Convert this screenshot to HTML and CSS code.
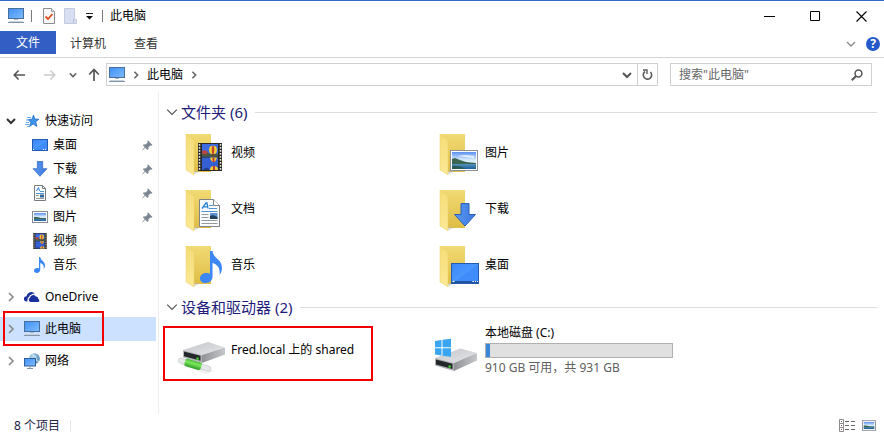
FILE: index.html
```html
<!DOCTYPE html>
<html lang="zh-CN">
<head>
<meta charset="utf-8">
<title>此电脑</title>
<link rel="stylesheet" href="styles.css">
</head>
<body>
<svg class="sprite" aria-hidden="true">
  <defs>
    <linearGradient id="screen" x1="0" y1="0" x2="1" y2="1"><stop offset="0" stop-color="#3f90f5"/><stop offset="1" stop-color="#7fbcff"/></linearGradient>
    <linearGradient id="desk" x1="0" y1="0" x2="1" y2="1"><stop offset="0" stop-color="#3b86f7"/><stop offset=".5" stop-color="#4a97ff"/><stop offset=".52" stop-color="#3f8cfa"/><stop offset="1" stop-color="#3f8cfa"/></linearGradient>
    <linearGradient id="arrow" x1="0" y1="0" x2="1" y2="0"><stop offset="0" stop-color="#5a97f0"/><stop offset="1" stop-color="#3b7be0"/></linearGradient>
    <linearGradient id="folderBack" x1="0" y1="0" x2="0" y2="1"><stop offset="0" stop-color="#f1da74"/><stop offset="1" stop-color="#dfbd45"/></linearGradient>
    <linearGradient id="folderFront" x1="0" y1="0" x2="0" y2="1"><stop offset="0" stop-color="#f6dc78"/><stop offset="1" stop-color="#fbe995"/></linearGradient>
    <linearGradient id="sky" x1="0" y1="0" x2="0" y2="1"><stop offset="0" stop-color="#5a8ff0"/><stop offset=".45" stop-color="#d5e9fb"/><stop offset="1" stop-color="#f4fbff"/></linearGradient>
    <linearGradient id="sea" x1="0" y1="0" x2="0" y2="1"><stop offset="0" stop-color="#5f9fc4"/><stop offset="1" stop-color="#1d5c97"/></linearGradient>
    <linearGradient id="metal" x1="0" y1="0" x2="1" y2="1"><stop offset="0" stop-color="#c2c4c8"/><stop offset="1" stop-color="#e6e7e9"/></linearGradient>
    <linearGradient id="metalSide" x1="0" y1="0" x2="1" y2="0"><stop offset="0" stop-color="#8f9195"/><stop offset="1" stop-color="#c5c7ca"/></linearGradient>
    <linearGradient id="pipe" x1="0" y1="0" x2="0" y2="1"><stop offset="0" stop-color="#3fb52e"/><stop offset=".4" stop-color="#7ee860"/><stop offset="1" stop-color="#2c9c22"/></linearGradient>
    <radialGradient id="globe" cx=".35" cy=".35" r=".8"><stop offset="0" stop-color="#b7dcf0"/><stop offset="1" stop-color="#3f7dab"/></radialGradient>
  </defs>
  <symbol id="pc" viewBox="0 0 16 16">
    <rect x=".5" y=".5" width="15" height="10" fill="url(#screen)" stroke="#496f98"/>
    <path d="M6 11h4v1H6z" fill="#a7b6c4"/><path d="M1 13.5h14" stroke="#c6d0da"/><path d="M0 14.5h16" stroke="#8394a6"/>
  </symbol>
  <symbol id="desktop" viewBox="0 0 28 21">
    <rect x=".5" y=".5" width="27" height="20" fill="url(#desk)" stroke="#245bb0"/>
    <path d="M1 19h26" stroke="#16437f" stroke-width="1.5"/><path d="M1.500 18.500h2M21.500 18.500h1.500M24 18.500h1M26 18.500h1" stroke="#fff"/>
  </symbol>
  <symbol id="desktop-small" viewBox="0 0 16 12">
    <rect x=".5" y=".5" width="15" height="11" fill="url(#desk)" stroke="#245bb0"/>
    <path d="M1 10.500h1M11 10.500h1M13 10.500h1" stroke="#fff"/>
  </symbol>
  <symbol id="down" viewBox="0 0 24 24">
    <path d="M8 .5h8v11h6.500L12 23 1.500 11.500H8z" fill="url(#arrow)" stroke="#2d5fb5"/>
  </symbol>
  <symbol id="doc" viewBox="0 0 21 28">
    <path d="M.5.500h14l6 6v21H.5z" fill="#fafcfd" stroke="#7d8388"/><path d="M14.500.500v6h6" fill="#fff" stroke="#7d8388"/>
    <path d="M3 9.500 7 4h1l1 5.500M5 7.800h4" fill="none" stroke="#2a82d7" stroke-width="1.300"/>
    <path d="M10 6.500h4M10 9.500h8M2.500 12.500h16" stroke="#4c93d8"/>
    <path d="M2.500 15.500h7M2.500 18.500h7M2.500 21.500h16M2.500 24.500h16" stroke="#94999e"/>
    <path d="M11 14h7.500v6H11z" fill="#5b8fd6"/><path d="M11 17l3-1 4.500 2v2H11z" fill="#23415e"/>
  </symbol>
  <symbol id="doc-small" viewBox="0 0 12 16">
    <path d="M.5.500h8l3 3v12H.5z" fill="#fafcfd" stroke="#767c82"/><path d="M8.500.500v3h3" fill="none" stroke="#767c82"/>
    <path d="M2.500 6 4.500 2.500l1 3.500" fill="none" stroke="#2a82d7"/>
    <path d="M6 6.500h4M2 8.500h8" stroke="#4c93d8"/><path d="M2 10.500h3M2 13.500h8" stroke="#94999e"/><path d="M6 9.500h4v3H6z" fill="#34679b"/>
  </symbol>
  <symbol id="picture" viewBox="0 0 28 21">
    <rect x=".5" y=".5" width="27" height="20" fill="#fff" stroke="#8b9096"/>
    <path d="M2 2h24v17H2z" fill="url(#sky)"/><path d="M2 13h24v6H2z" fill="url(#sea)"/>
    <path d="M2 9l3-1 5 2 6 2 10 1v1H2z" fill="#3c6652"/><path d="M2 16q8-1 13 3H2z" fill="#2b5a58"/>
    <path d="M8 6q6-2 16 0v2q-8-1-16-2z" fill="#fff" opacity=".7"/>
  </symbol>
  <symbol id="picture-small" viewBox="0 0 16 12">
    <rect x=".5" y=".5" width="15" height="11" fill="#fff" stroke="#868b91"/>
    <path d="M2 2h12v8H2z" fill="url(#sky)"/><path d="M2 7h12v3H2z" fill="url(#sea)"/><path d="M2 6l3 0 4 1 5 0v1H2z" fill="#3c6652"/>
  </symbol>
  <symbol id="film" viewBox="0 0 24 28">
    <path d="M0 0h24v28H0z" fill="#2b2924"/><path d="M4 1h16v12.500H4z" fill="#3f6be0"/><path d="M4 14.500h16V27H4z" fill="#3560d4"/>
    <path d="M1.500 1v27M22.500 1v27" stroke="#e8e6df" stroke-width="1.500" stroke-dasharray="1.700 1.300"/>
    <path d="M4 11l5-1.500 5 2 6-1v3H4z" fill="#4a5a3c"/>
    <path d="M4 8q3-2 6 1l-2 2.500-4-1z" fill="#b8453f"/>
    <ellipse cx="15" cy="7" rx="4" ry="4.200" fill="#f0cf35"/><path d="M14.200 3q-1 4 0 8h1.600q1-4 0-8z" fill="#c7432f"/><path d="M14 11h2.500v2H14z" fill="#6b4a24"/>
    <path d="M12 14.500h7q-.5 3-2.500 4.500h-2q-2-1.500-2.500-4.500z" fill="#efce34"/><path d="M14.500 14.500h2v4.500h-2z" fill="#c23a30"/>
    <path d="M12 27q0-4 4-4t4 4z" fill="#efce34"/><path d="M15 23h2v4h-2z" fill="#c23a30"/><path d="M5 27q3-4 6-1v1z" fill="#24408f"/>
  </symbol>
  <symbol id="note" viewBox="0 0 22 32">
    <path d="M10 0h2.500c1 8 9.500 8 9.500 17 0 3-1 5-2.500 7 1-7-2-10.500-7-12v14c0 3-3 6-7 6-3.500 0-5.500-2-5.500-4.500C0 24 3 22 6.500 22c1.500 0 2.500.3 3.500.8z" fill="#3c86f5"/>
  </symbol>
  <symbol id="folder" viewBox="0 0 48 48">
    <path d="M8 5h25v38H16z" fill="url(#folderBack)"/><path d="M13 43l3-1 5 0v1l-5 2.500z" fill="#b8b8b8" opacity=".5"/>
    <path d="M8 5l8 6.500V46l-8-5z" fill="url(#folderFront)" stroke="#edd06b" stroke-width=".5"/>
  </symbol>
  <symbol id="pin" viewBox="0 0 11 11">
    <path d="M6 .5 10.500 5l-1.200.8-1-.3-2 2L6.500 9l-1 1-2.300-2.300L.5 10.500 0 10.800l.4-.7 2.300-3L.8 5.300l1-1 1.800.2 2-2L5.300 1.300z" fill="#7d8793"/>
  </symbol>
  <symbol id="chev-down" viewBox="0 0 10 10"><path d="M1 3l4 4 4-4" fill="none" stroke="currentColor" stroke-width="var(--stroke, 1)"/></symbol>
  <symbol id="chev-right" viewBox="0 0 10 10"><path d="M3 1l4 4-4 4" fill="none" stroke="currentColor" stroke-width="var(--stroke, 1)"/></symbol>
  <symbol id="arrow-left" viewBox="0 0 14 12"><path d="M13 6H1.500M6 1.200 1.300 6 6 10.800" fill="none" stroke="currentColor" stroke-width="1.700"/></symbol>
</svg>

<div class="window">
  <header class="titlebar">
    <svg class="i16" aria-hidden="true"><use href="#pc"/></svg>
    <span class="divider"></span>
    <div class="quick">
      <button aria-label="属性"><svg width="12" height="16" viewBox="0 0 12 16"><path d="M.5.500h8l3 3v12H.5z" fill="#f8f8f8" stroke="#8c8c8c"/><path d="M8.500.500v3h3" fill="#ddd" stroke="#a0a0a0"/><path d="M2.500 8.500 5 11l4.500-5" fill="none" stroke="#dd4d1c" stroke-width="1.800"/></svg></button>
      <button aria-label="新建文件夹"><svg width="13" height="16" viewBox="0 0 13 16"><path d="M.5.500h10v11l2 0v4H.5z" fill="#d9dff2" stroke="#c3cbe2"/><path d="M9.500 11v4" stroke="#b7c0da"/></svg></button>
      <button aria-label="自定义快速访问工具栏"><svg width="7" height="7" viewBox="0 0 7 7"><path d="M0 .5h7" stroke="#222"/><path d="M0 3h7L3.500 6.500z" fill="#111"/></svg></button>
    </div>
    <span class="divider"></span>
    <h1 class="title">此电脑</h1>
    <div class="controls">
      <button aria-label="最小化"><svg width="11" height="11" viewBox="0 0 11 11"><path d="M0 5.500h11" stroke="#000"/></svg></button>
      <button aria-label="最大化"><svg width="11" height="11" viewBox="0 0 11 11"><path d="M.5.500h9v9h-9z" fill="none" stroke="#000"/></svg></button>
      <button aria-label="关闭"><svg width="11" height="11" viewBox="0 0 11 11"><path d="M.5.500l10 10M10.500.500l-10 10" stroke="#000" stroke-width="1.100"/></svg></button>
    </div>
  </header>

  <div class="tabs">
    <button class="tab tab-file">文件</button>
    <button class="tab">计算机</button>
    <button class="tab">查看</button>
    <div class="tab-tools">
      <button aria-label="展开功能区"><svg class="i10 faint"><use href="#chev-down"/></svg></button>
      <button class="help" aria-label="帮助">?</button>
    </div>
  </div>

  <div class="navbar">
    <div class="history">
      <button aria-label="后退"><svg width="13" height="12"><use href="#arrow-left"/></svg></button>
      <button class="off" aria-label="前进"><svg class="flip" width="13" height="12"><use href="#arrow-left"/></svg></button>
      <button class="recent" aria-label="最近浏览的位置"><svg class="i8 bold"><use href="#chev-down"/></svg></button>
      <button aria-label="上移"><svg width="12" height="13" viewBox="0 0 12 13"><path d="M6 13V1.500M1.200 6.500 6 1.500l4.800 5" fill="none" stroke="currentColor" stroke-width="1.700"/></svg></button>
    </div>
    <div class="address">
      <svg class="i16" aria-hidden="true"><use href="#pc"/></svg>
      <svg class="i8 bold" aria-hidden="true"><use href="#chev-right"/></svg>
      <a class="crumb" href="#">此电脑</a>
      <svg class="i8 bold" aria-hidden="true"><use href="#chev-right"/></svg>
      <button class="drop" aria-label="以前的位置"><svg class="i10 heavy"><use href="#chev-down"/></svg></button>
      <button class="refresh" aria-label="刷新"><svg width="11" height="12" viewBox="0 0 11 12"><path d="M3 2.500A4.200 4.200 0 1 0 8.500 3" fill="none" stroke="#5c5c5c" stroke-width="1.600"/><path d="M1 1h4v4" fill="none" stroke="#5c5c5c" stroke-width="1.400"/></svg></button>
    </div>
    <label class="search">
      <input type="text" aria-label="搜索" placeholder="搜索&quot;此电脑&quot;">
      <svg width="12" height="12" viewBox="0 0 12 12" aria-hidden="true"><circle cx="7.500" cy="4.500" r="3.400" fill="none" stroke="#555" stroke-width="1.500"/><path d="M5 7 .8 11.200" stroke="#555" stroke-width="2"/></svg>
    </label>
  </div>

  <div class="body">
    <nav class="tree">
      <div class="node">
        <button class="toggle open" aria-label="折叠"><svg class="i10"><use href="#chev-down"/></svg></button>
        <a href="#"><svg class="i16" viewBox="0 0 16 16"><path d="M9.500 2l1.300 4 4.200.2-3.300 2.600 1.200 4.700-3.700-2.500-3.700 2.500 1.300-4.200L4 6.500l4.200-.3z" fill="#3d92ee" stroke="#2470bd" stroke-width=".8"/><path d="M3 4.500h4M2 7h3M2 9.500h3M1 11.500h4M3 13.500h2" stroke="#62a9ef"/></svg>快速访问</a>
      </div>
      <div class="node sub"><a href="#"><svg class="i16" viewBox="0 0 16 16"><use href="#desktop-small" y="2" width="16" height="12"/></svg>桌面</a><svg class="pin"><use href="#pin"/></svg></div>
      <div class="node sub"><a href="#"><svg class="i16"><use href="#down"/></svg>下载</a><svg class="pin"><use href="#pin"/></svg></div>
      <div class="node sub"><a href="#"><svg class="i16" viewBox="0 0 16 16"><use href="#doc-small" x="2" width="12" height="16"/></svg>文档</a><svg class="pin"><use href="#pin"/></svg></div>
      <div class="node sub"><a href="#"><svg class="i16" viewBox="0 0 16 16"><use href="#picture-small" y="2" width="16" height="12"/></svg>图片</a><svg class="pin"><use href="#pin"/></svg></div>
      <div class="node sub"><a href="#"><svg class="i16" viewBox="0 0 16 16"><use href="#film" x="1" width="14" height="16"/></svg>视频</a></div>
      <div class="node sub"><a href="#"><svg class="i16" viewBox="0 0 16 16"><use href="#note" x="2" width="11" height="16"/></svg>音乐</a></div>
      <div class="node root">
        <button class="toggle" aria-label="展开"><svg class="i10"><use href="#chev-right"/></svg></button>
        <a href="#"><svg class="i16" viewBox="0 0 16 16"><path d="M3.500 12.500H2.500A2.600 2.600 0 0 1 2.500 7.300 5 5 0 0 1 11 4.500Q9 4 7.500 5.500 5.500 5.500 5 8q-2 .8-1.500 4.500z" fill="#1a2f9e"/><path d="M6.500 13A2.300 2.300 0 0 1 6 8.700 3.200 3.200 0 0 1 11.800 7.500 2.500 2.500 0 0 1 14.300 10 1.600 1.600 0 0 1 14.300 13z" fill="#1a2f9e"/></svg>OneDrive</a>
      </div>
      <div class="node root selected marked">
        <button class="toggle" aria-label="展开"><svg class="i10"><use href="#chev-right"/></svg></button>
        <a href="#"><svg class="i16"><use href="#pc"/></svg>此电脑</a>
      </div>
      <div class="node root">
        <button class="toggle" aria-label="展开"><svg class="i10"><use href="#chev-right"/></svg></button>
        <a href="#"><svg class="i16" viewBox="0 0 16 16"><circle cx="10.500" cy="5.500" r="5.300" fill="url(#globe)"/><path d="M8 1.500q4 1 4 4t3 3" fill="none" stroke="#dceef6"/><rect x=".5" y="5.500" width="11" height="7.500" fill="url(#screen)" stroke="#2e5f96"/><path d="M3 15.500h6M6 13v2" stroke="#8394a6"/></svg>网络</a>
      </div>
    </nav>

    <main class="content">
      <section>
        <h2 class="group"><svg class="i12"><use href="#chev-down"/></svg>文件夹 (6)</h2>
        <div class="tiles">
          <a class="tile" href="#"><svg class="i48" viewBox="0 0 48 48"><use href="#folder"/><use href="#film" x="20" y="14" width="24" height="28"/></svg>视频</a>
          <a class="tile" href="#"><svg class="i48" viewBox="0 0 48 48"><use href="#folder"/><use href="#picture" x="18" y="21" width="28" height="21"/></svg>图片</a>
          <a class="tile" href="#"><svg class="i48" viewBox="0 0 48 48"><use href="#folder"/><use href="#doc" x="21" y="14" width="21" height="28"/></svg>文档</a>
          <a class="tile" href="#"><svg class="i48" viewBox="0 0 48 48"><use href="#folder"/><use href="#down" x="21" y="18" width="24" height="24"/></svg>下载</a>
          <a class="tile" href="#"><svg class="i48" viewBox="0 0 48 48"><use href="#folder"/><use href="#note" x="22" y="10" width="22" height="32"/></svg>音乐</a>
          <a class="tile" href="#"><svg class="i48" viewBox="0 0 48 48"><use href="#folder"/><use href="#desktop" x="19" y="22" width="28" height="21"/></svg>桌面</a>
        </div>
      </section>
      <section>
        <h2 class="group"><svg class="i12"><use href="#chev-down"/></svg>设备和驱动器 (2)</h2>
        <div class="tiles drives">
          <a class="tile marked" href="#">
            <svg class="i48" viewBox="0 0 48 48">
              <path d="M1 38 9 36 36 45 28 48z" fill="#999" opacity=".15"/>
              <g transform="rotate(16 2 35)">
                <rect x="0" y="32" width="34" height="5" rx="2.500" fill="#e6e9ea" stroke="#bfc4c6" stroke-width=".6"/>
                <rect x="7" y="30.500" width="17" height="8" rx="2" fill="url(#pipe)"/>
              </g>
              <path d="M5 24 30 16l17 5.500L24 29z" fill="url(#metal)"/><path d="M24 29l23-7.500v7L24 37z" fill="url(#metalSide)"/><path d="M5 24l19 5v8L5 31.500z" fill="#b4b6b9"/><path d="M6 25.500l16.500 4.300v5L6 30.300z" fill="#25282b"/>
              <path d="M18.500 31.500h2.200v2.200h-2.200z" fill="#43e02f"/>
            </svg>
            <span>Fred.local 上的 shared</span>
          </a>
          <a class="tile" href="#">
            <svg class="i48" viewBox="0 0 48 48">
              <path d="M3 32 28.500 22.500 45 27 22 37z" fill="url(#metal)"/><path d="M22 37l23-10v7.500L22 45z" fill="url(#metalSide)"/><path d="M3 32l19 5v8L3 39.500z" fill="#aeb0b3"/><path d="M4 33.500l16.500 4.300v5.200L4 38.500z" fill="#25282b"/>
              <path d="M16.500 39.500h2.200v2.200h-2.200z" fill="#43e02f"/>
              <path d="M3 15l6.500-1v7.300H3zM10.500 13.800 19 12.700v8.600h-8.500zM3 22.300h6.500V29.500L3 28.600zM10.500 22.300H19V30.800l-8.500-1.100z" fill="#3aa6f2"/>
            </svg>
            <span class="drive">
              <span id="disk-name">本地磁盘 (C:)</span>
              <progress value="21" max="931" aria-labelledby="disk-name"></progress>
              <span class="space">910 GB 可用，共 931 GB</span>
            </span>
          </a>
        </div>
      </section>
    </main>
  </div>

  <footer class="status">
    <span class="count">8 个项目</span>
    <div class="views">
      <button aria-label="详细信息"><svg width="16" height="13" viewBox="0 0 16 13"><path d="M.5.500h4v12h-4zM.5 4.500h4M.5 8.500h4" fill="none" stroke="#8c8c8c"/><path d="M2 2.500h1M2 6.500h1M2 10.500h1" stroke="#7a5560"/><path d="M6 2.500h4M12 2.500h4M6 6.500h4M12 6.500h4M6 10.500h4M12 10.500h4" stroke="#666"/></svg></button>
      <button aria-label="大图标"><svg width="14" height="11"><use href="#picture-small"/></svg></button>
    </div>
  </footer>
</div>
</body>
</html>
```
FILE: styles.css
```css
* { box-sizing: border-box; }

body {
  margin: 0;
  background: #fff;
  color: #000;
  font: 12px/16px "Noto Sans", "Noto Sans CJK SC", sans-serif;
}

button {
  display: flex;
  align-items: center;
  justify-content: center;
  padding: 0;
  border: 0;
  background: none;
  color: inherit;
  font: inherit;
}

a { color: inherit; text-decoration: none; }
svg { flex: none; display: block; }

.sprite { position: absolute; width: 0; height: 0; }
.i8 { width: 8px; height: 8px; }
.i10 { width: 10px; height: 10px; }
.i12 { width: 12px; height: 12px; }
.i16 { width: 16px; height: 16px; }
.i48 { width: 48px; height: 48px; }
.bold { --stroke: 2; color: #666; }
.heavy { --stroke: 2; color: #555; }
.faint { color: #888; --stroke: 1.3; }
.flip { transform: scaleX(-1); }

.window {
  display: flex;
  flex-direction: column;
  min-height: 100vh;
  border-top: 1px solid #3b66cc;
}

/* Title bar */
.titlebar { display: flex; align-items: center; height: 30px; padding-left: 8px; }
.divider { width: 1px; height: 12px; margin: 0 7px; background: #777; }
.quick { display: flex; align-items: center; gap: 9px; margin: 0 2px 0 4px; }
.title { margin: 0; font-size: 12px; font-weight: 400; }
.controls { display: flex; align-self: stretch; margin-left: auto; }
.controls button { width: 46px; }

/* Ribbon tabs */
.tabs { display: flex; height: 27px; border-bottom: 1px solid #d5d5d5; color: #333; }
.tab { height: 25px; padding: 0 14px; }
.tab-file { height: 23px; padding: 0 16px; background: #335fc5; color: #fff; }
.tab-tools { display: flex; align-items: center; gap: 10px; margin-left: auto; padding-right: 4px; }
.help {
  width: 14px;
  height: 14px;
  border-radius: 50%;
  background: #2459cc;
  color: #fff;
  font-weight: 700;
}

/* Address row */
.navbar { display: flex; align-items: center; gap: 12px; padding: 5px 12px 6px; color: #555; }
.history { display: flex; align-items: center; gap: 13px; margin-right: -6px; padding-left: 1px; }
.history .off { color: #ccc; margin: 0 0 0 4px; }
.history .recent { margin-right: -2px; }
.address, .search { display: flex; align-items: center; height: 23px; border: 1px solid #d0d0d0; }
.address { flex: 1; gap: 7px; padding-left: 2px; color: #000; }
.drop { width: 20px; margin-left: auto; margin-right: -7px; }
.refresh { width: 20px; align-self: stretch; border-left: 1px solid #d0d0d0; }
.search { width: 202px; padding: 0 8px; }
.search input {
  flex: 1;
  min-width: 0;
  padding: 0;
  border: 0;
  outline: 0;
  background: none;
  font: inherit;
}
.search input::placeholder { color: #666; }

/* Navigation tree */
.body { display: flex; flex: 1; }
.tree { width: 159px; padding: 17px 2px 0 0; border-right: 1px solid #eee; }
.node { position: relative; display: flex; align-items: center; height: 24px; padding: 0 3px 0 6px; }
.node a { display: flex; align-items: center; gap: 5px; flex: 1; }
.node.sub { padding-left: 32px; }
.node.root { margin-top: 8px; }
.toggle { width: 10px; height: 16px; margin-right: 8px; color: #888; --stroke: 1.6; }
.toggle.open { color: #333; --stroke: 2; }
.pin { width: 11px; height: 11px; }
.selected { background: #cce1ff; }

/* Red highlight frames */
.marked { position: relative; }
.marked::after { content: ""; position: absolute; border: 2px solid #f40000; pointer-events: none; }
.node.marked::after { inset: -6px 52px -5px 3px; }
.tile.marked::after { inset: 0 59px -7px -15px; }

/* Folder and drive tiles */
.content { flex: 1; min-width: 0; padding: 10px 7px 0; }
.group {
  display: flex;
  align-items: center;
  gap: 3px;
  height: 20px;
  margin: 0;
  color: #1e1b7b;
  font-size: 15px;
  font-weight: 400;
  line-height: 20px;
}
.group svg { color: #555; }
.group::after { content: ""; flex: 1; height: 1px; margin-left: 5px; background: #ddd; }
.tiles { display: grid; grid-template-columns: repeat(auto-fill, 254px); row-gap: 8px; padding: 7px 0 8px 12px; }
.drives { padding-top: 9px; }
.tile { display: flex; align-items: center; gap: 5px; height: 48px; }
.drive { display: flex; flex-direction: column; width: 188px; }
progress { display: block; width: 100%; height: 15px; margin: 2px 0; border: 1px solid #b0b0b0; background: #e0e0e0; appearance: none; }
progress::-webkit-progress-bar { background: #e0e0e0; }
progress::-webkit-progress-value { background: #3c86d8; }
.space { color: #606060; }

/* Status bar */
.status { display: flex; align-items: center; height: 23px; padding: 0 8px 0 14px; color: #1f2348; }
.count { padding-right: 10px; border-right: 1px solid #e5e5e5; line-height: 12px; }
.views { display: flex; align-items: center; gap: 7px; margin-left: auto; }
```
